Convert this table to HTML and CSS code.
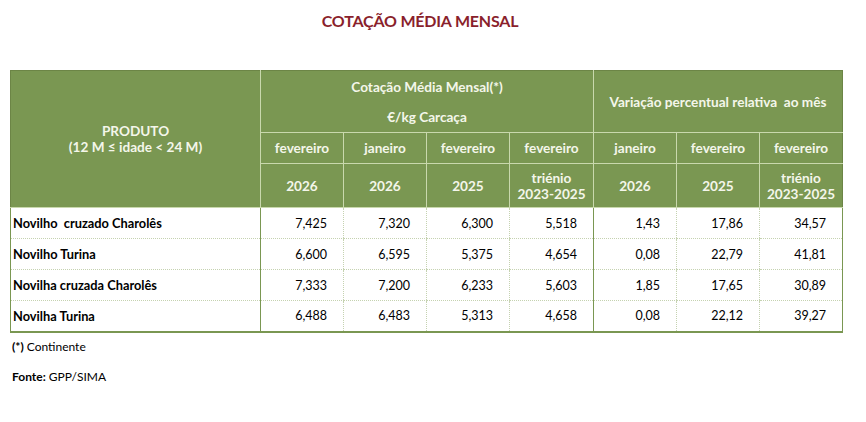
FILE: index.html
```html
<!DOCTYPE html>
<html lang="pt">
<head>
<meta charset="utf-8">
<link rel="stylesheet" href="styles.css">
</head>
<body>
<div class="page">
  <h1 class="title">COTAÇÃO MÉDIA MENSAL</h1>
  <table class="grid">
    <colgroup>
      <col class="c-prod"><col class="c-n"><col class="c-n"><col class="c-n"><col class="c-n4"><col class="c-n"><col class="c-n"><col class="c-n">
    </colgroup>
    <thead>
      <tr class="h1">
        <th rowspan="3" class="prod">PRODUTO<br>(12 M ≤ idade &lt; 24 M)</th>
        <th colspan="4" class="grp"><div class="grp-a">Cotação Média Mensal(*)</div><div class="grp-b">€/kg Carcaça</div></th>
        <th colspan="3" class="grp sep">Variação percentual relativa&nbsp; ao mês</th>
      </tr>
      <tr class="h2">
        <th>fevereiro</th><th>janeiro</th><th>fevereiro</th><th>fevereiro</th>
        <th class="sep">janeiro</th><th>fevereiro</th><th>fevereiro</th>
      </tr>
      <tr class="h3">
        <th>2026</th><th>2026</th><th>2025</th><th>triénio<br>2023-2025</th>
        <th class="sep">2026</th><th>2025</th><th>triénio<br>2023-2025</th>
      </tr>
    </thead>
    <tbody>
      <tr><td class="name">Novilho&nbsp; cruzado Charolês</td><td>7,425</td><td>7,320</td><td>6,300</td><td>5,518</td><td class="sep">1,43</td><td>17,86</td><td>34,57</td></tr>
      <tr><td class="name">Novilho Turina</td><td>6,600</td><td>6,595</td><td>5,375</td><td>4,654</td><td class="sep">0,08</td><td>22,79</td><td>41,81</td></tr>
      <tr><td class="name">Novilha cruzada Charolês</td><td>7,333</td><td>7,200</td><td>6,233</td><td>5,603</td><td class="sep">1,85</td><td>17,65</td><td>30,89</td></tr>
      <tr><td class="name">Novilha Turina</td><td>6,488</td><td>6,483</td><td>5,313</td><td>4,658</td><td class="sep">0,08</td><td>22,12</td><td>39,27</td></tr>
    </tbody>
  </table>
  <p class="note"><b>(*)</b> Continente</p>
  <p class="note src"><b>Fonte:</b> GPP/SIMA</p>
</div>
</body>
</html>
```
FILE: styles.css
```css
* { box-sizing: border-box; }
html, body { margin: 0; padding: 0; background: #fff; }
body { font-family: Lato, "Open Sans", "Liberation Sans", sans-serif; color: #000; }
.page { padding: 11px 0 0 10px; width: 866px; }
.title {
  margin: 0;
  width: 820px;
  text-align: center;
  font-size: 16px;
  font-weight: 700;
  color: #8a1f2c;
  height: 20px;
  line-height: 20px;
  letter-spacing: -0.2px;
}
.grid {
  margin-top: 39px;
  border-collapse: collapse;
  table-layout: fixed;
  width: 832px;
  font-size: 13.6px;
}
.c-prod { width: 250px; }
.c-n { width: 83px; }
.c-n4 { width: 84px; }
thead th {
  background: #7a9752;
  color: #f4f6ea;
  font-weight: 700;
  text-align: center;
  border: 1px solid #c9d8ad;
  padding: 0;
  line-height: 16px;
}
thead tr.h1 th { border-top: 1px solid #6c8546; }
thead th.prod { border-left: 1px solid #6c8546; }
thead tr.h1 th:last-child, thead tr.h2 th:last-child, thead tr.h3 th:last-child { border-right: 1px solid #6c8546; }
.h1 { height: 62px; }
.h2 { height: 31px; }
.h3 { height: 44px; }
.grp-a { height: 30px; line-height: 30px; }
.grp-b { height: 30px; line-height: 30px; }
tbody td {
  height: 31px;
  padding: 0 16px 0 4px;
  text-align: right;
  font-size: 12.5px;
  border-left: 1px dotted #c5d2b0;
  border-bottom: 1px dotted #c5d2b0;
}
tbody tr:last-child td { border-bottom: 2px solid #7a9752; }
tbody td.name {
  text-align: left;
  font-weight: 700;
  font-size: 12.8px;
  padding-left: 2px;
  border-left: 1px solid #7a9752;
  border-right: 1px solid #7a9752;
}
tbody td.sep { border-left: 1px solid #7a9752; }
tbody td:last-child { border-right: 1px solid #7a9752; }
.note { margin: 0; font-size: 12px; padding-left: 2px; }
.note:first-of-type { margin-top: 6px; }
.src { margin-top: 15px; }
```
